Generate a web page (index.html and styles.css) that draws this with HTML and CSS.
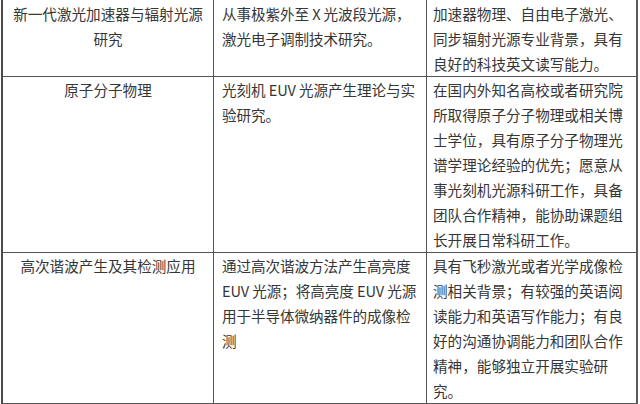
FILE: index.html
```html
<!DOCTYPE html>
<html lang="zh-CN">
<head>
<meta charset="utf-8">
<title>岗位表</title>
<link rel="stylesheet" href="styles.css">
</head>
<body>
<div class="page">
  <table class="jobs">
    <colgroup>
      <col class="c1">
      <col class="c2">
      <col class="c3">
    </colgroup>
    <tbody>
      <tr class="first">
        <td class="topic">新一代激光加速器与辐射光源研究</td>
        <td class="work">从事极紫外至 X 光波段光源，激光电子调制技术研究。</td>
        <td class="req">加速器物理、自由电子激光、同步辐射光源专业背景，具有良好的科技英文读写能力。</td>
      </tr>
      <tr>
        <td class="topic">原子分子物理</td>
        <td class="work">光刻机 EUV 光源产生理论与实验研究。</td>
        <td class="req">在国内外知名高校或者研究院所取得原子分子物理或相关博士学位，具有原子分子物理光谱学理论经验的优先；愿意从事光刻机光源科研工作，具备团队合作精神，能协助课题组长开展日常科研工作。</td>
      </tr>
      <tr>
        <td class="topic">高次谐波产生及其检测应用</td>
        <td class="work">通过高次谐波方法产生高亮度 EUV 光源；将高亮度 EUV 光源用于半导体微纳器件的成像检测</td>
        <td class="req">具有飞秒激光或者光学成像检测相关背景；有较强的英语阅读能力和英语写作能力；有良好的沟通协调能力和团队合作精神，能够独立开展实验研究。</td>
      </tr>
    </tbody>
  </table>
</div>
</body>
</html>
```
FILE: styles.css
```css
html, body {
  margin: 0;
  padding: 0;
  background: #ffffff;
}

.page {
  width: 640px;
  height: 404px;
  overflow: hidden;
  padding-left: 1px;
  box-sizing: border-box;
}

.jobs {
  table-layout: fixed;
  width: 637px;
  border-collapse: separate;
  border-spacing: 0;
  border-left: 2px solid #4a4a4a;
  font-family: "Noto Sans CJK SC", "Noto Sans", sans-serif;
  font-size: 14.6px;
  line-height: 25px;
  color: #363636;
}

.c1 { width: 211px; }
.c2 { width: 213px; }
.c3 { width: 211px; }

.jobs td {
  vertical-align: top;
  padding: 0;
  border-right: 1px solid #555555;
  border-bottom: 1px solid #555555;
}

.jobs td.topic {
  text-align: center;
  padding-left: 6px;
  padding-right: 6px;
}

.jobs td.work {
  padding-left: 8px;
  padding-right: 3px;
  letter-spacing: -0.1px;
}

.jobs td.req {
  padding-left: 6px;
  padding-right: 10px;
  border-right: 2px solid #5a5a5a;
}

.jobs tr.first td {
  padding-top: 1px;
}

.jobs tr:last-child td {
  border-bottom: 2px solid #555555;
}
```
